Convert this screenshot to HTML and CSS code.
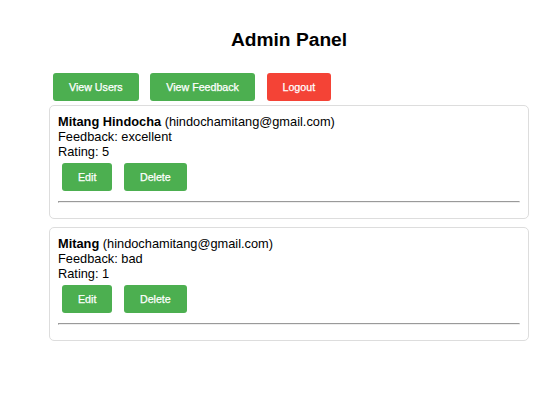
FILE: index.html
```html
<!DOCTYPE html>
<html lang="en">
<head>
    <meta charset="UTF-8">
    <meta name="viewport" content="width=device-width, initial-scale=1.0">
    <title>Admin Panel</title>
    <link rel="stylesheet" href="styles.css">
</head>
<body>

    <div class="panel">
        <h2>Admin Panel</h2>

        <div class="nav">
            <button class="btn">View Users</button>
            <button class="btn">View Feedback</button>
            <button class="btn btn-red">Logout</button>
        </div>

        <div id="feedbackList">
            <div class="feedback-item">
                <div><strong>Mitang Hindocha</strong> (hindochamitang@gmail.com)</div>
                <div>Feedback: excellent</div>
                <div>Rating: 5</div>
                <button class="btn">Edit</button>
                <button class="btn">Delete</button>
                <hr>
            </div>
            <div class="feedback-item">
                <div><strong>Mitang</strong> (hindochamitang@gmail.com)</div>
                <div>Feedback: bad</div>
                <div>Rating: 1</div>
                <button class="btn">Edit</button>
                <button class="btn">Delete</button>
                <hr>
            </div>
        </div>
    </div>

</body>
</html>
```

FILE: styles.css
```css
/* Admin panel */
body {
    font-family: Arial, "Liberation Sans", sans-serif;
    font-size: 12.8px;
    margin: 0;
    padding: 13px 0 0 0;
    color: #000;
}

.panel {
    width: 480px;
    margin-left: 49px;
}

h2 {
    text-align: center;
    font-size: 19.2px;
    margin: 16px 0 18px 0;
}

.btn {
    font-family: Arial, "Liberation Sans", sans-serif;
    font-size: 10.67px;
    line-height: 12px;
    padding: 8px 16px;
    margin: 4px;
    border: none;
    border-radius: 3px;
    background-color: #4CAF50;
    color: #fff;
    -webkit-text-stroke: 0.25px #fff;
    cursor: pointer;
}

.btn-red {
    background-color: #f44336;
}

.feedback-item {
    border: 1px solid #ddd;
    border-radius: 5px;
    padding: 8px;
    margin-bottom: 8px;
}

.feedback-item hr {
    margin: 6.4px 0;
}
```
